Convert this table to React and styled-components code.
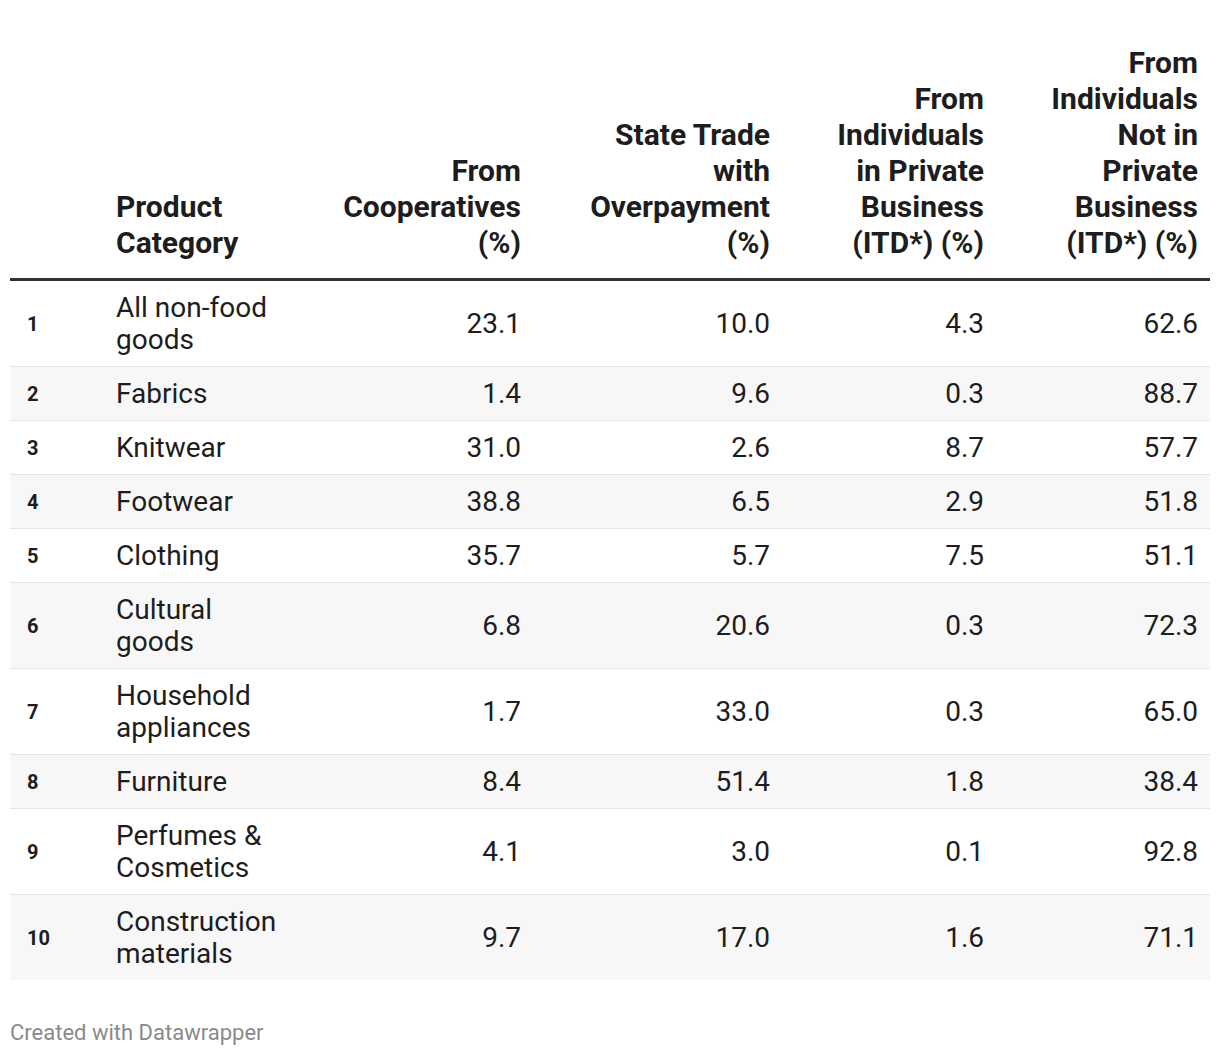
import React from 'react'
import styled, { createGlobalStyle } from 'styled-components'

const GlobalStyle = createGlobalStyle`
  body {
    margin: 0;
    background: #ffffff;
    font-family: Roboto, "Liberation Sans", sans-serif;
    color: #1d1d1d;
  }
  th, td {
    box-sizing: border-box;
  }
`

const Wrapper = styled.div`
  width: 1200px;
  padding: 35px 10px 0;
`

const Table = styled.table`
  width: 1200px;
  border-collapse: collapse;
  table-layout: fixed;
`

const Col = styled.col`
  width: ${(p) => p.$w}px;
`

const HeadCell = styled.th`
  padding: 10px 12px 17px ${(p) => p.$pl || 12}px;
  font-size: 30px;
  line-height: 36px;
  font-weight: 700;
  text-align: ${(p) => (p.$num ? 'right' : 'left')};
  vertical-align: bottom;
  border-bottom: 3px solid #333333;
  color: #1d1d1d;
`

const Row = styled.tr`
  background: ${(p) => (p.$alt ? '#f7f7f7' : '#ffffff')};
  border-bottom: ${(p) => (p.$last ? 'none' : '1px solid #e6e6e6')};
`

const IndexCell = styled.td`
  padding: 11px 12px 10px 17px;
  font-size: 20px;
  font-weight: 700;
  line-height: 32px;
  vertical-align: middle;
`

const NameCell = styled.td`
  padding: 11px 12px 10px 12px;
  font-size: 28px;
  line-height: 32px;
  vertical-align: middle;
`

const ValueCell = styled.td`
  padding: 11px 12px 10px 12px;
  font-size: 28px;
  line-height: 32px;
  text-align: right;
  vertical-align: middle;
`

const Footer = styled.div`
  margin-top: 40px;
  font-size: 22px;
  line-height: 26px;
  color: #8a8a8a;
`

const rows = [
  ['All non-food goods', '23.1', '10.0', '4.3', '62.6'],
  ['Fabrics', '1.4', '9.6', '0.3', '88.7'],
  ['Knitwear', '31.0', '2.6', '8.7', '57.7'],
  ['Footwear', '38.8', '6.5', '2.9', '51.8'],
  ['Clothing', '35.7', '5.7', '7.5', '51.1'],
  ['Cultural goods', '6.8', '20.6', '0.3', '72.3'],
  ['Household appliances', '1.7', '33.0', '0.3', '65.0'],
  ['Furniture', '8.4', '51.4', '1.8', '38.4'],
  ['Perfumes & Cosmetics', '4.1', '3.0', '0.1', '92.8'],
  ['Construction materials', '9.7', '17.0', '1.6', '71.1'],
]

export default function App() {
  return (
    <>
      <GlobalStyle />
      <Wrapper>
        <Table>
          <colgroup>
            <Col $w={94} />
            <Col $w={192} />
            <Col $w={237} />
            <Col $w={249} />
            <Col $w={214} />
            <Col $w={214} />
          </colgroup>
          <thead>
            <tr>
              <HeadCell />
              <HeadCell>Product Category</HeadCell>
              <HeadCell $num>From Cooperatives (%)</HeadCell>
              <HeadCell $num $pl={40}>State Trade with Overpayment (%)</HeadCell>
              <HeadCell $num $pl={30}>From Individuals in Private Business (ITD*) (%)</HeadCell>
              <HeadCell $num $pl={30}>From Individuals Not in Private Business (ITD*) (%)</HeadCell>
            </tr>
          </thead>
          <tbody>
            {rows.map((r, i) => (
              <Row key={i} $alt={i % 2 === 1} $last={i === rows.length - 1}>
                <IndexCell>{i + 1}</IndexCell>
                <NameCell>{r[0]}</NameCell>
                <ValueCell>{r[1]}</ValueCell>
                <ValueCell>{r[2]}</ValueCell>
                <ValueCell>{r[3]}</ValueCell>
                <ValueCell>{r[4]}</ValueCell>
              </Row>
            ))}
          </tbody>
        </Table>
        <Footer>Created with Datawrapper</Footer>
      </Wrapper>
    </>
  )
}
